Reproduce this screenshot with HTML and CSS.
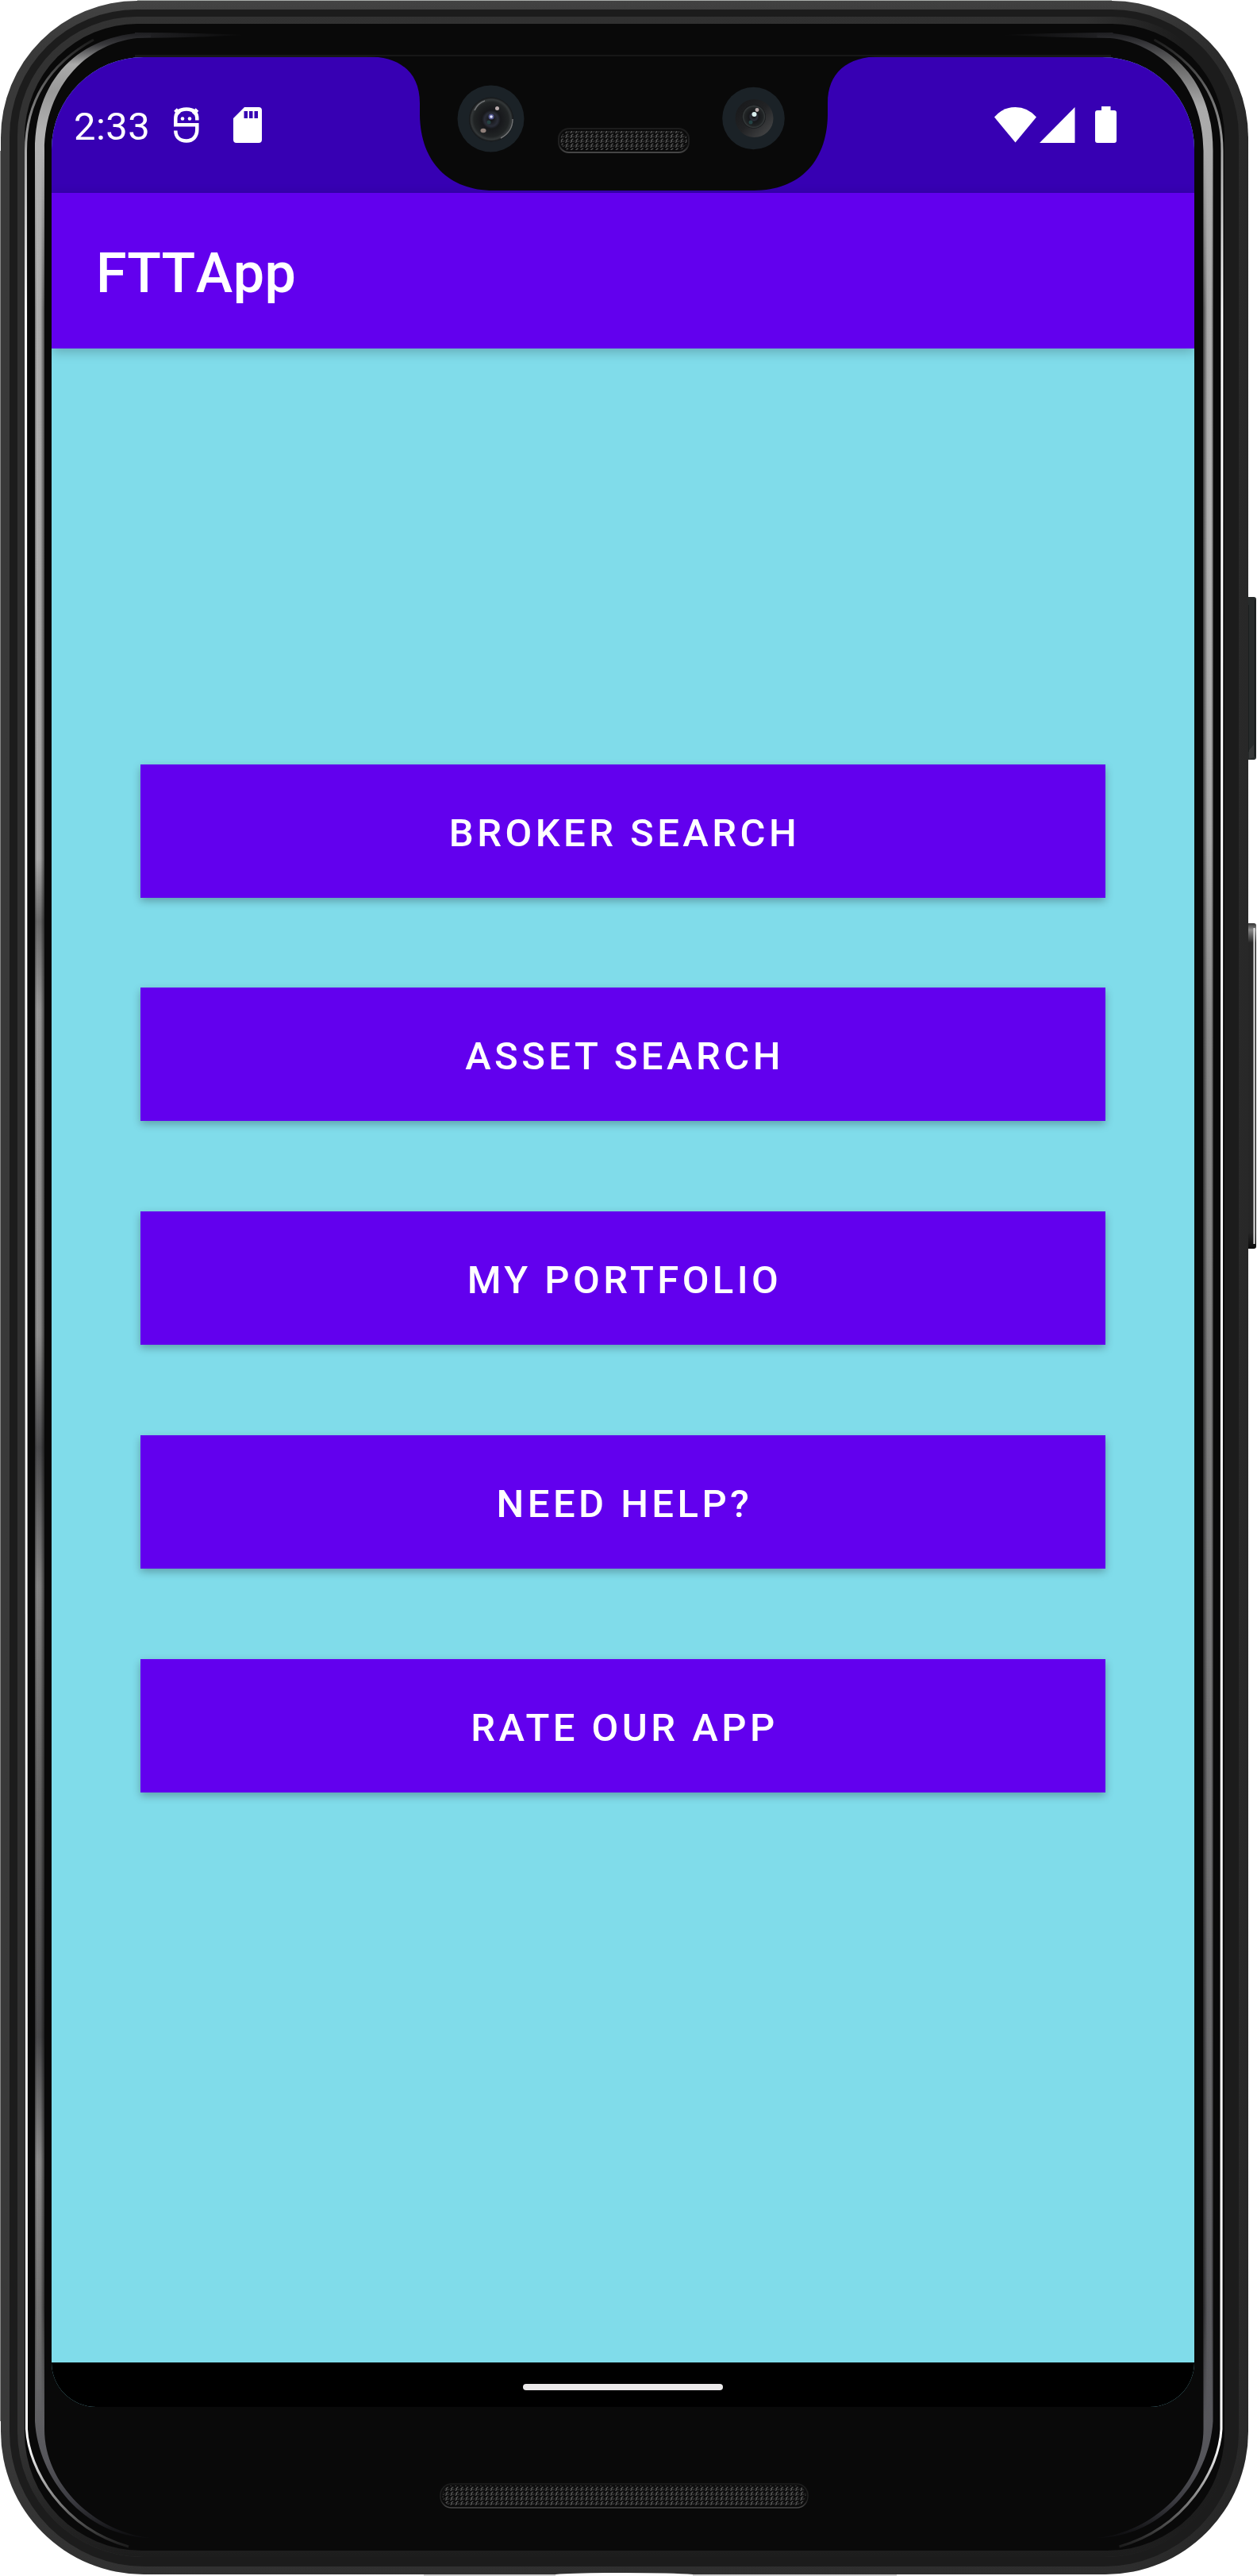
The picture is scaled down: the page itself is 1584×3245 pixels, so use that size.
FILE: index.html
```html
<!DOCTYPE html>
<html lang="en">
<head>
<meta charset="utf-8">
<title>FTTApp</title>
<link rel="stylesheet" href="styles.css">
</head>
<body>
<div class="phone">
  <svg class="frame" width="1584" height="3245" viewBox="0 0 1584 3245" aria-hidden="true">
    <defs>
      <linearGradient id="shell" x1="0" y1="0" x2="1584" y2="0" gradientUnits="userSpaceOnUse">
        <stop offset="0" stop-color="#393939"/><stop offset=".9" stop-color="#343434"/><stop offset="1" stop-color="#272727"/>
      </linearGradient>
      <linearGradient id="shellShade" x1="0" y1="0" x2="0" y2="3245" gradientUnits="userSpaceOnUse">
        <stop offset="0" stop-color="#fff" stop-opacity=".06"/><stop offset=".03" stop-color="#000" stop-opacity="0"/><stop offset=".94" stop-color="#000" stop-opacity="0"/><stop offset="1" stop-color="#000" stop-opacity=".14"/>
      </linearGradient>
      <linearGradient id="lip" x1="22" y1="0" x2="1551" y2="0" gradientUnits="userSpaceOnUse">
        <stop offset="0" stop-color="#323232"/><stop offset=".88" stop-color="#303030"/><stop offset=".96" stop-color="#1c1c1c"/>
      </linearGradient>
      <linearGradient id="lipFade" x1="0" y1="3080" x2="0" y2="3220" gradientUnits="userSpaceOnUse">
        <stop offset="0" stop-color="#1d1d1d" stop-opacity="0"/><stop offset="1" stop-color="#1d1d1d"/>
      </linearGradient>
      <linearGradient id="hair" x1="0" y1="50" x2="0" y2="3208" gradientUnits="userSpaceOnUse">
        <stop offset="0" stop-color="#1c1c1c"/><stop offset=".02" stop-color="#666"/><stop offset=".045" stop-color="#aaa"/><stop offset=".11" stop-color="#fff"/><stop offset=".96" stop-color="#fff"/><stop offset=".98" stop-color="#888"/><stop offset="1" stop-color="#1c1c1c"/>
      </linearGradient>
      <linearGradient id="glintLeft" x1="0" y1="40" x2="0" y2="3197" gradientUnits="userSpaceOnUse">
        <stop offset="0" stop-color="#1b1b1e"/><stop offset=".005" stop-color="#38383b"/><stop offset=".013" stop-color="#aaa"/><stop offset=".024" stop-color="#999"/><stop offset=".04" stop-color="#b2b2b2"/><stop offset=".33" stop-color="#aaa"/>
        <stop offset=".355" stop-color="#6c6c6c"/><stop offset=".39" stop-color="#999"/><stop offset=".52" stop-color="#8f8f8f"/><stop offset=".565" stop-color="#4c4c4e"/><stop offset=".62" stop-color="#858585"/><stop offset=".7" stop-color="#666"/><stop offset=".8" stop-color="#4a4a4c"/><stop offset=".85" stop-color="#8d8d8d"/><stop offset=".92" stop-color="#707070"/><stop offset=".97" stop-color="#55555a"/><stop offset=".985" stop-color="#3c3c42"/><stop offset="1" stop-color="#0c0c0e"/>
      </linearGradient>
      <linearGradient id="glintRight" x1="0" y1="40" x2="0" y2="3197" gradientUnits="userSpaceOnUse">
        <stop offset="0" stop-color="#1b1b1e"/><stop offset=".005" stop-color="#38383b"/><stop offset=".013" stop-color="#666"/><stop offset=".03" stop-color="#aaa"/><stop offset=".2" stop-color="#b4b4b4"/><stop offset=".32" stop-color="#aaa"/><stop offset=".4" stop-color="#8c8c8c"/><stop offset=".5" stop-color="#858585"/><stop offset=".8" stop-color="#6c6c6e"/><stop offset=".92" stop-color="#5c5c60"/><stop offset=".97" stop-color="#55555a"/><stop offset=".985" stop-color="#3c3c42"/><stop offset="1" stop-color="#0c0c0e"/>
      </linearGradient>
      <linearGradient id="glintEdge" x1="44" y1="0" x2="56" y2="0" gradientUnits="userSpaceOnUse">
        <stop offset="0" stop-color="#000" stop-opacity=".4"/><stop offset=".2" stop-color="#000" stop-opacity="0"/><stop offset=".6" stop-color="#000" stop-opacity=".05"/><stop offset="1" stop-color="#000" stop-opacity=".6"/>
      </linearGradient>
      <linearGradient id="straightFade" x1="0" y1="190" x2="0" y2="3050" gradientUnits="userSpaceOnUse">
        <stop offset="0" stop-color="#000"/><stop offset=".07" stop-color="#fff"/><stop offset=".95" stop-color="#fff"/><stop offset="1" stop-color="#000"/>
      </linearGradient>
      <mask id="straight" maskUnits="userSpaceOnUse" x="40" y="190" width="20" height="2860">
        <rect x="40" y="190" width="20" height="2860" fill="url(#straightFade)"/>
      </mask>
      <linearGradient id="glintTail" x1="170" y1="0" x2="310" y2="0" gradientUnits="userSpaceOnUse">
        <stop offset="0" stop-color="#232326"/><stop offset="1" stop-color="#0a0a0a"/>
      </linearGradient>
      <linearGradient id="volume" x1="0" y1="1163" x2="0" y2="1573" gradientUnits="userSpaceOnUse">
        <stop offset="0" stop-color="#333"/><stop offset=".02" stop-color="#888"/><stop offset=".06" stop-color="#262626"/><stop offset=".95" stop-color="#262626"/><stop offset="1" stop-color="#0c0c0c"/>
      </linearGradient>
      <path id="shellShape" d="M173 1H1401A172 172 0 0 1 1573 173V3063A180 180 0 0 1 1393 3243H181A180 180 0 0 1 1 3063V173A172 172 0 0 1 173 1Z"/>
      <path id="lipShape" d="M173 21H1401A150 150 0 0 1 1551 171V3063A158 158 0 0 1 1393 3221H180A158 158 0 0 1 22 3063V171A150 150 0 0 1 173 21Z"/>
      <path id="glintShape" d="M190 41C110 41 44 90 44 190V3050C48 3120 105 3196 190 3197C120 3190 56 3130 56 3060V190C56 110 110 47 190 47Z"/>
      <g id="edgeLight">
        <path d="M118 50C60 82 32.500 130 32.500 190L33.500 3060C36 3110 78 3184 162 3208" fill="none" stroke="url(#hair)" stroke-width="3"/>
        <path d="M170 41Q230 41 310 44Q230 48 170 48Z" fill="url(#glintTail)"/>
      </g>
    </defs>
    <rect x="1570" y="752" width="13" height="205" rx="3" fill="#272b2b"/>
    <path d="M1573 762V947M1581.500 756V953" stroke="#111414" stroke-width="1"/>
    <path d="M1574 945L1580 938V954L1574 956Z" fill="#363838"/>
    <rect x="1570" y="1163" width="13" height="410" rx="3" fill="url(#volume)"/>
    <path d="M1580.500 1169V1567" stroke="#e6e6e6" stroke-width="2"/>
    <path d="M534 3243H1130V3245H534Z" fill="#d2d2d2"/>
    <use href="#shellShape" fill="url(#shell)"/>
    <use href="#shellShape" fill="url(#shellShade)"/>
    <path d="M.5 190V3050" stroke="#858585"/>
    <path d="M173 .5H1401" stroke="#a9adaa"/>
    <path d="M700 3243Q724 3241 786 3241T873 3243V3245H700Z" fill="#fff"/>
    <path d="M173 12H1401A160 160 0 0 1 1561 172V3063A170 170 0 0 1 1391 3233H182A170 170 0 0 1 12 3063V172A160 160 0 0 1 173 12Z" fill="#1c1c1c"/>
    <use href="#lipShape" fill="url(#lip)"/>
    <use href="#lipShape" fill="url(#lipFade)"/>
    <path d="M173 30H1401A142 142 0 0 1 1543 172V3065A148 148 0 0 1 1395 3213H179A148 148 0 0 1 31 3065V172A142 142 0 0 1 173 30Z" fill="#090909"/>
    <path d="M170 70.500H1400" stroke="#171717" stroke-width="3"/>
    <use href="#edgeLight"/>
    <use href="#glintShape" fill="url(#glintLeft)"/>
    <path d="M44 190H56V3050H44Z" fill="url(#glintEdge)" mask="url(#straight)"/>
    <g transform="matrix(-1 0 0 1 1572.500 0)">
      <use href="#edgeLight"/>
      <use href="#glintShape" fill="url(#glintRight)"/>
      <path d="M44 190H56V3050H44Z" fill="url(#glintEdge)" mask="url(#straight)"/>
    </g>
  </svg>

  <main class="screen">
    <header class="status-bar">
      <div class="status-left">
        <span class="clock">2:33</span>
        <svg class="icon-debug" width="32" height="46" viewBox="0 0 32 46">
          <path d="M2.300 24V15C2.300 6 8 2.500 16 2.500S29.300 6 29.300 15V16.500" fill="none" stroke="#fff" stroke-width="4.500"/>
          <path d="M2 3L7 8.500M29.500 3L24.500 8.500" stroke="#fff" stroke-width="5"/>
          <path d="M0 22.300H29.300V28C29.300 37 24 42.500 16 42.500S2.300 38 2.300 29.500" fill="none" stroke="#fff" stroke-width="4.500"/>
          <circle cx="11" cy="14.500" r="2.300" fill="#fff"/><circle cx="20" cy="14.500" r="2.300" fill="#fff"/>
        </svg>
        <svg class="icon-sd" width="36" height="45" viewBox="0 0 36 45">
          <path fill="#fff" fill-rule="evenodd" d="M14 0H32Q36 0 36 4V41Q36 45 32 45H4Q0 45 0 41V14ZM13.500 5V14H18V5ZM20 5V14H24.500V5ZM26.500 5V14H31V5Z"/>
        </svg>
      </div>
      <div class="status-right">
        <svg class="icon-wifi" width="54" height="45" viewBox="0 0 54 45"><path fill="#fff" d="M0 12.500Q11 0 26.500 0T53 12.500L26.500 44.500Z"/></svg>
        <svg class="icon-signal" width="45" height="45" viewBox="0 0 45 45"><path fill="#fff" d="M0 45L44.500 0V45Z"/></svg>
        <svg class="icon-battery" width="27" height="46" viewBox="0 0 27 46"><path fill="#fff" d="M8 0H19.500V5H24Q27 5 27 8V43Q27 46 24 46H3Q0 46 0 43V8Q0 5 3 5H8Z"/></svg>
      </div>
    </header>
    <div class="app-bar"><h1 class="app-title">FTTApp</h1></div>
    <nav class="menu">
      <button class="menu-button">BROKER SEARCH</button>
      <button class="menu-button">ASSET SEARCH</button>
      <button class="menu-button">MY PORTFOLIO</button>
      <button class="menu-button">NEED HELP?</button>
      <button class="menu-button">RATE OUR APP</button>
    </nav>
    <footer class="nav-bar"><span class="home-handle"></span></footer>
  </main>

  <svg class="hardware" width="1584" height="3245" viewBox="0 0 1584 3245" aria-hidden="true">
    <defs>
      <pattern id="mesh" width="6.300" height="6" patternUnits="userSpaceOnUse">
        <path d="M.5 5.800L2.500 4L1.500 2.800L4 .8" fill="none" stroke="#5c5c5c" stroke-width="1.200"/>
        <path d="M3.800 4.800L5.800 3.200" stroke="#404040" stroke-width="1"/>
      </pattern>
      <linearGradient id="rim" x1="0" y1="0" x2="0" y2="1"><stop offset="0" stop-color="#1c1c1c"/><stop offset=".7" stop-color="#202020"/><stop offset="1" stop-color="#464646"/></linearGradient>
      <radialGradient id="lens">
        <stop offset="0" stop-color="#111"/><stop offset=".3" stop-color="#2a2d38"/><stop offset=".42" stop-color="#17181b"/><stop offset=".78" stop-color="#212425"/><stop offset=".9" stop-color="#343839"/><stop offset="1" stop-color="#111315"/>
      </radialGradient>
      <linearGradient id="lensShade" x1="0" y1="0" x2="1" y2="1">
        <stop offset="0" stop-color="#161719"/><stop offset=".5" stop-color="#222325"/><stop offset="1" stop-color="#4c4d4e"/>
      </linearGradient>
    </defs>
    <path d="M462 71C505 71 529 92 529 130V145C530 205 566 240 622 240H950C1006 240 1042 205 1043 145V130C1043 92 1067 71 1110 71Z" fill="#090909"/>
    <circle cx="618.500" cy="149.500" r="42" fill="#1b2227"/>
    <circle cx="619" cy="150.500" r="28" fill="url(#lens)"/>
    <path d="M598 139Q602 130 611 127M631 174Q646 166 646 150" fill="none" stroke="#707274" stroke-width="1.500"/>
    <circle cx="619" cy="147" r="3.500" fill="#51558c"/><circle cx="619" cy="147" r="1.800" fill="#e3e6ff"/>
    <circle cx="626.500" cy="136.500" r="2.500" fill="#b7a9aa"/><ellipse cx="609" cy="164.500" rx="3.500" ry="2.800" fill="#90807a"/><circle cx="616" cy="154" r="2.500" fill="#254344"/>
    <circle cx="949.500" cy="149" r="39.300" fill="#1b2227"/>
    <circle cx="950.500" cy="149" r="24" fill="url(#lensShade)"/>
    <circle cx="950" cy="147" r="15" fill="url(#lens)"/>
    <circle cx="950.500" cy="144" r="3" fill="#d9eeee"/><circle cx="954" cy="138.500" r="2.400" fill="#b7a9aa"/><circle cx="946" cy="154" r="2.500" fill="#254344"/>
    <rect x="704" y="162" width="164" height="30" rx="13" fill="#0b0b0b" stroke="url(#rim)" stroke-width="2"/>
    <rect x="706.500" y="165" width="159" height="24" rx="11" fill="url(#mesh)"/>
    <rect x="555" y="3129" width="463" height="30" rx="14" fill="#0b0b0b" stroke="url(#rim)" stroke-width="1.500"/>
    <rect x="557.500" y="3131" width="458" height="25" rx="12" fill="url(#mesh)"/>
  </svg>
</div>
</body>
</html>
```
FILE: styles.css
```css
* { box-sizing: border-box; }

body {
  margin: 0;
  background: #fff;
  font-family: Roboto, "Liberation Sans", sans-serif;
  color: #fff;
}

.phone {
  position: relative;
  width: 1584px;
  height: 3245px;
  padding: 72px 79px 0 65px;
  overflow: hidden;
}

.frame,
.hardware {
  position: absolute;
  left: 0;
  top: 0;
  display: block;
}

.hardware { pointer-events: none; }

.screen {
  position: relative;
  display: flex;
  flex-direction: column;
  width: 1440px;
  height: 2960px;
  border-radius: 116px 116px 56px 56px;
  overflow: hidden;
  background: #80dcea;
}

.status-bar {
  display: flex;
  justify-content: space-between;
  align-items: flex-start;
  height: 171px;
  padding: 62px 98px 0 28px;
  background: #3700b3;
}

.status-left,
.status-right {
  display: flex;
  align-items: flex-start;
}

.status-left svg,
.status-right svg { display: block; }

.clock {
  width: 98px;
  margin-top: -3px;
  font-size: 49px;
  line-height: 58px;
  letter-spacing: 0.4px;
  white-space: nowrap;
}

.icon-debug { margin: 1px 0 0 28px; }
.icon-sd { margin: 1px 0 0 43px; }
.icon-wifi { margin: 1px 3px 0 0; }
.icon-signal { margin: 1px 25px 0 0; }

.app-bar {
  position: relative;
  display: flex;
  align-items: center;
  height: 196px;
  padding: 6px 56px 0;
  background: #6200ee;
  box-shadow: 0 4px 14px rgba(0, 0, 0, 0.24);
}

.app-title {
  margin: 0;
  font-size: 70px;
  font-weight: 500;
  line-height: 82px;
  letter-spacing: 0.6px;
  font-kerning: none;
}

.menu {
  display: flex;
  flex: 1;
  flex-direction: column;
  gap: 114px;
  padding: 524px 112px 0;
}

.menu-button {
  height: 168px;
  padding: 5px 0 0 4px;
  border: 0;
  background: #6200ee;
  box-shadow: 0 4px 10px rgba(0, 0, 0, 0.28);
  color: #fff;
  font-family: inherit;
  font-size: 49px;
  font-weight: 500;
  line-height: 58px;
  letter-spacing: 4.45px;
}

.menu-button:first-child { margin-bottom: -1px; }

.nav-bar {
  display: flex;
  justify-content: center;
  height: 56px;
  padding-top: 27px;
  background: #000;
}

.home-handle {
  width: 252px;
  height: 8px;
  border-radius: 4px;
  background: #ebe9ea;
}
```
